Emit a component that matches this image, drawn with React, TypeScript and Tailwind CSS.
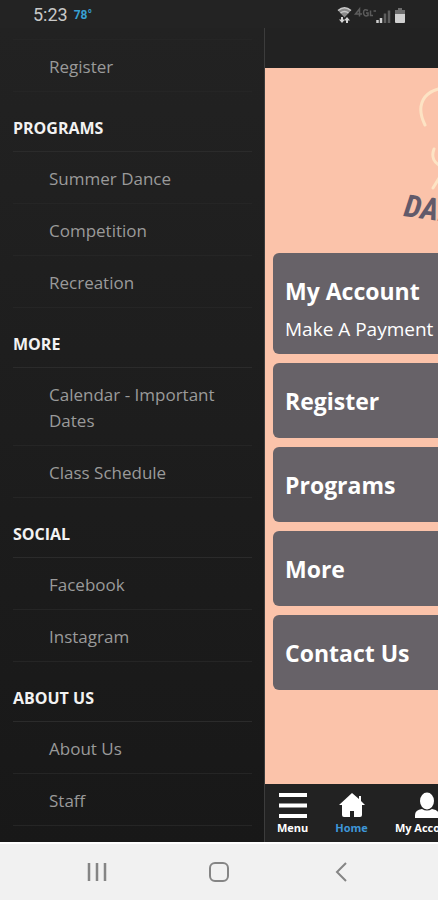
import React from 'react';

type Section = { title: string; items: string[] };

const sections: Section[] = [
  { title: 'PROGRAMS', items: ['Summer Dance', 'Competition', 'Recreation'] },
  { title: 'MORE', items: ['Calendar - Important Dates', 'Class Schedule'] },
  { title: 'SOCIAL', items: ['Facebook', 'Instagram'] },
  { title: 'ABOUT US', items: ['About Us', 'Staff'] },
];

const cards: { title: string; note?: string }[] = [
  { title: 'My Account', note: 'Make A Payment' },
  { title: 'Register' },
  { title: 'Programs' },
  { title: 'More' },
  { title: 'Contact Us' },
];

function StatusBar() {
  return (
    <header className="flex h-7 shrink-0 items-center justify-between bg-[#232323] pt-[2px] pr-[31px] pl-[33px] font-['Roboto',sans-serif]">
      <div className="flex items-center gap-[6px]">
        <span className="text-[18px] leading-6 text-[#c9c9c9]">5:23</span>
        <span className="text-[12px] leading-6 font-bold text-[#37a0d2]">78°</span>
      </div>
      <svg width="70" height="20" viewBox="0 0 70 20" className="h-5 w-[70px]" aria-hidden="true">
        <path d="M1 5.5Q7.500 0 14 5.500L7.500 12.500Z" fill="#8b8b8b" />
        <path d="M1 5.500Q7.500 0 14 5.500M3.500 8Q7.500 5 11.500 8" fill="none" stroke="#c8c8c8" strokeWidth="1.500" />
        <path d="M5 12v4M10 18v-4" stroke="#d5d5d5" strokeWidth="2" />
        <path d="M2 14.500h6l-3 3.500zM7 15.500h6l-3-3.500z" fill="#d5d5d5" />
        <path d="M22.500 11.500V4L18.500 9H25M31 5.500Q26.500 3 26.500 8Q27 12 31 10.500V8H29M33.500 5.500V10.500H36M36.500 6H39" fill="none" stroke="#5c5c5c" strokeWidth="1.500" />
        <path d="M40.500 18v-3M44 18v-5" stroke="#cfcfcf" strokeWidth="2.500" />
        <path d="M48 18V8.500M52 18V5.500" stroke="#5d5d5d" strokeWidth="2.500" />
        <path d="M61 3h4v2h3v5H58V5h3z" fill="#6d6d6d" />
        <path d="M58 9h10v8q0 1-1 1h-8q-1 0-1-1z" fill="#d0d0d0" />
      </svg>
    </header>
  );
}

function DrawerItem({ label }: { label: string }) {
  return (
    <li className="border-b border-[#252525] pt-[14px] pr-6 pb-[11px] pl-9">
      <a href="#" className="block text-[17px] leading-[26px] text-[#9a9a9a]">{label}</a>
    </li>
  );
}

function Drawer() {
  return (
    <nav
      aria-label="Main menu"
      className="w-[265px] shrink-0 border-r border-[#3c3c3c] bg-linear-to-b from-[#222222] to-[#181818] pr-3 pl-[13px]"
    >
      <ul className="mt-[11px] border-t border-[#252525]">
        <DrawerItem label="Register" />
      </ul>
      {sections.map((section) => (
        <section key={section.title}>
          <h2 className="border-b border-[#2b2b2b] pt-[23px] pb-[10px] text-[16px] leading-[26px] font-bold text-[#f2f2f2]">
            {section.title}
          </h2>
          <ul>
            {section.items.map((item) => (
              <DrawerItem key={item} label={item} />
            ))}
          </ul>
        </section>
      ))}
    </nav>
  );
}

function Logo() {
  return (
    <svg width="300" height="176" viewBox="0 0 300 176" className="ml-[129px] h-[176px] w-[300px] max-w-none" role="img" aria-label="Dance studio logo">
      <g fill="none" stroke="#fde3c4" strokeWidth="3" strokeLinecap="round">
        <path d="M31 48C26 38 25 28 31 20C36 14 42 12 50 11" />
        <path d="M40 72C37 80 40 86 47 89M47 98L39 111" />
      </g>
      <text x="9" y="139" transform="rotate(8 9 139)" fill="#625a6a" fontFamily="'Roboto Condensed', 'Open Sans Condensed', 'Liberation Sans Narrow', Roboto, sans-serif" fontSize="31" fontWeight="700" fontStyle="italic">
        DANCE
      </text>
    </svg>
  );
}

function TabBar() {
  return (
    <nav aria-label="Tabs" className="flex h-[58px] shrink-0 gap-[27px] bg-[#222222] pt-2 pl-3 text-[11px] leading-4 font-bold text-white">
      <button type="button" className="flex shrink-0 flex-col items-center gap-[2px]">
        <svg width="28" height="26" viewBox="0 0 28 26" aria-hidden="true">
          <path d="M0 3h28M0 13.500h28M0 24h28" stroke="#fff" strokeWidth="4" />
        </svg>
        Menu
      </button>
      <button type="button" className="flex shrink-0 flex-col items-center gap-[2px] text-[#3e96d8]">
        <svg width="26" height="26" viewBox="0 0 26 26" aria-hidden="true">
          <path d="M13 1L0 13h3v10q0 2 2 2h6v-6h4v6h6q2 0 2-2V13h3l-4-4V4h-2v3z" fill="#fff" />
        </svg>
        Home
      </button>
      <button type="button" className="flex shrink-0 flex-col items-center gap-[2px]">
        <svg width="26" height="26" viewBox="0 0 26 26" aria-hidden="true">
          <ellipse cx="13" cy="9" rx="7" ry="8.500" fill="#fff" />
          <path d="M1 26v-3q0-5 7-6q5 3 10 0q7 1 7 6v3z" fill="#fff" />
        </svg>
        My Account
      </button>
    </nav>
  );
}

function SystemNav() {
  return (
    <footer className="flex h-[58px] shrink-0 items-center justify-around border-t-2 border-white bg-[#f1f1f1] px-9 text-[#858585]">
      <button type="button" aria-label="Recent apps">
        <svg width="20" height="20" viewBox="0 0 20 20" aria-hidden="true">
          <path d="M2 1v18M10 1v18M18 1v18" stroke="currentColor" strokeWidth="2.500" />
        </svg>
      </button>
      <button type="button" aria-label="Home screen">
        <svg width="20" height="20" viewBox="0 0 20 20" fill="none" aria-hidden="true">
          <rect x="1" y="1" width="18" height="18" rx="5" stroke="currentColor" strokeWidth="2" />
        </svg>
      </button>
      <button type="button" aria-label="Back">
        <svg width="20" height="20" viewBox="0 0 20 20" fill="none" aria-hidden="true">
          <path d="M15 1L6 10L15 19" stroke="currentColor" strokeWidth="2" />
        </svg>
      </button>
    </footer>
  );
}

export default function App() {
  return (
    <div className="flex min-h-screen flex-col overflow-hidden bg-[#181818] font-['Open_Sans','Noto_Sans',sans-serif]">
      <StatusBar />
      <div className="flex flex-1">
        <Drawer />
        <div className="flex min-w-0 flex-1 flex-col overflow-hidden whitespace-nowrap">
          <div className="h-10 shrink-0 bg-[#222222]" />
          <main className="flex-1 bg-[#fbc3aa] pt-[9px]">
            <Logo />
            <div className="flex flex-col gap-[9px] pl-2">
              {cards.map((card) => (
                <a key={card.title} href="#" className="block rounded-l-md bg-[#676268] pt-[21px] pb-3 pl-3 text-white">
                  <h3 className="pb-[7px] text-[23px] leading-[35px] font-bold">{card.title}</h3>
                  {card.note && <p className="text-[19px] leading-[26px]">{card.note}</p>}
                </a>
              ))}
            </div>
          </main>
          <TabBar />
        </div>
      </div>
      <SystemNav />
    </div>
  );
}
